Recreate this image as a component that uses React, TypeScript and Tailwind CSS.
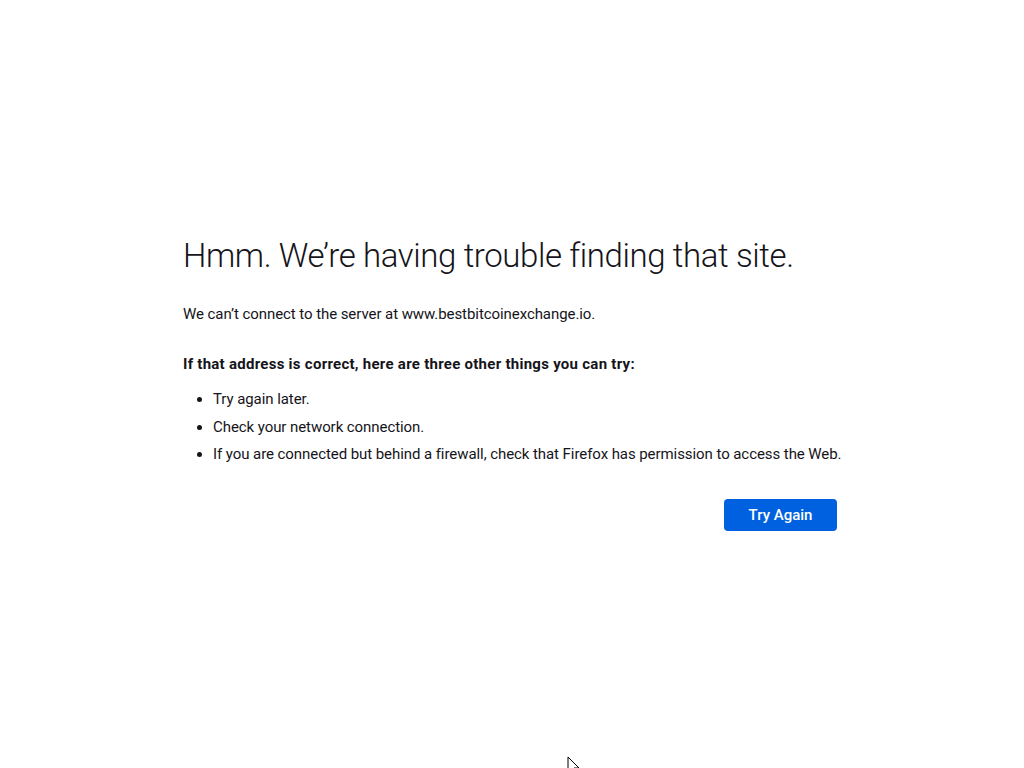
import React from "react";

export default function App() {
  return (
    <div
      className="relative w-[1024px] h-[768px] overflow-hidden bg-white text-[#15141a]"
      style={{ fontFamily: 'Roboto, "Noto Sans", sans-serif' }}
    >
      <div className="pl-[183px] pt-[233px]">
        <div className="w-[654px]">
          <h1 className="text-[33px] font-light leading-[46px] tracking-[-0.4px]">
            Hmm. We’re having trouble finding that site.
          </h1>
          <p className="mt-[24px] text-[15px] leading-[22px] tracking-[-0.07px]">
            We can’t connect to the server at www.bestbitcoinexchange.io.
          </p>
          <p className="mt-[28px] text-[15px] font-bold leading-[22px] tracking-[0.27px]">
            If that address is correct, here are three other things you can try:
          </p>
          <ul className="mt-[13px] pl-[30px] text-[15px] leading-[22px] tracking-[-0.07px] list-disc marker:text-[#15141a]">
            <li className="mb-[5.5px]">Try again later.</li>
            <li className="mb-[5.5px]">Check your network connection.</li>
            <li className="whitespace-nowrap">
              If you are connected but behind a firewall, check that Firefox has permission to access the Web.
            </li>
          </ul>
          <div className="mt-[34px] flex justify-end">
            <button className="h-[32px] w-[113px] rounded-[4px] bg-[#0061e0] text-[15px] font-medium text-white">
              Try Again
            </button>
          </div>
        </div>
      </div>
      <svg
        className="absolute left-[567px] top-[756px]"
        width="14"
        height="20"
        viewBox="0 0 14 20"
      >
        <path d="M1 1 L1 17 L5 13 L8 19 L10 18 L7 12 L12 12 Z" fill="#fff" stroke="#000" strokeWidth="1" />
      </svg>
    </div>
  );
}
